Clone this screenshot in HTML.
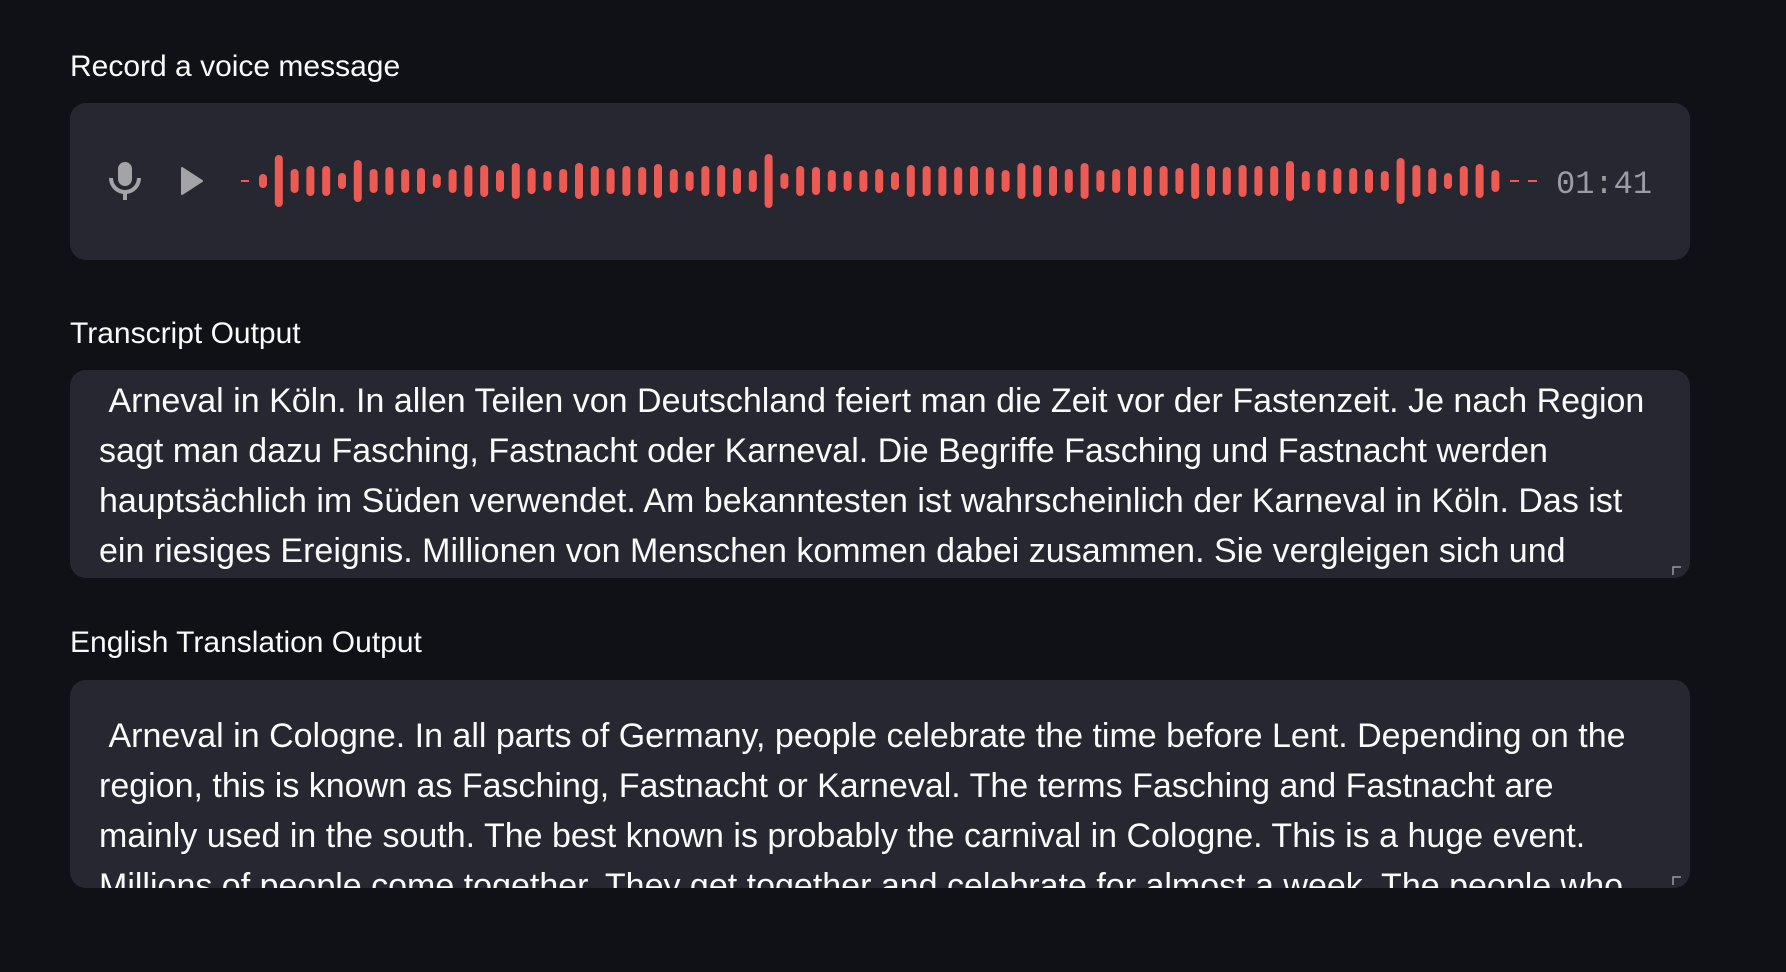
<!DOCTYPE html>
<html><head><meta charset="utf-8"><style>
html,body{margin:0;padding:0;background:#0f1117;width:1786px;height:972px;overflow:hidden}
body{font-family:"Liberation Sans",sans-serif;color:#fafafa;position:relative}
.lbl{position:absolute;left:70px;font-size:30px;letter-spacing:0px;line-height:34px}
.box{position:absolute;left:70px;width:1620px;background:#262730;border-radius:16px;overflow:hidden}
.txt{position:absolute;left:99px;font-size:34px;letter-spacing:0px;line-height:50px;white-space:nowrap;color:#fafafa}
.rz{position:absolute;width:10px;height:10px}
</style></head><body>
<div class="lbl" style="top:50px">Record a voice message</div>
<div class="box" style="top:103px;height:157px"></div>
<svg style="position:absolute;left:0;top:0" width="1786" height="300">
<g fill="#a3a3a8">
<rect x="118" y="162" width="14" height="24" rx="7"/>
<path d="M111 178 a14 14 0 0 0 28 0" stroke="#a3a3a8" stroke-width="4" fill="none"/>
<rect x="123" y="192" width="4" height="8"/>
<path d="M182 168 L202 181 L182 194 Z" stroke="#a3a3a8" stroke-width="2" stroke-linejoin="round"/>
</g>
<g fill="#ed5a53" id="w"></g>
<rect x="241" y="180" width="8" height="2" fill="#ed5a53"/>
<rect x="1510" y="180" width="9" height="2" fill="#ed5a53"/>
<rect x="1528" y="180" width="9" height="2" fill="#ed5a53"/>
<text x="1556" y="193" font-family="Liberation Mono,monospace" font-size="32" fill="#9c9ca2">01:41</text>
</svg>
<script>
var h=[14,52,24,30,30,16,42,24,28,24,26,14,24,32,32,22,36,26,20,24,36,30,26,30,28,34,24,20,30,32,26,22,54,16,30,28,22,20,22,24,18,32,30,30,28,30,28,22,36,32,30,24,36,22,24,30,30,30,26,36,30,28,32,30,30,40,20,24,26,26,24,20,46,32,26,16,30,34,22];
var g=document.getElementById('w'),s='';
for(var i=0;i<h.length;i++){var x=259+i*15.8;s+='<rect x="'+x.toFixed(1)+'" y="'+(181-h[i]/2)+'" width="8" height="'+h[i]+'" rx="4"/>';}
g.innerHTML=s;
</script>

<div class="lbl" style="top:317px">Transcript Output</div>
<div class="box" style="top:370px;height:208px">
<div class="txt" style="left:29px;top:6px">&nbsp;Arneval in Köln. In allen Teilen von Deutschland feiert man die Zeit vor der Fastenzeit. Je nach Region<br>sagt man dazu Fasching, Fastnacht oder Karneval. Die Begriffe Fasching und Fastnacht werden<br>hauptsächlich im Süden verwendet. Am bekanntesten ist wahrscheinlich der Karneval in Köln. Das ist<br>ein riesiges Ereignis. Millionen von Menschen kommen dabei zusammen. Sie vergleigen sich und</div>
<svg class="rz" style="right:8px;bottom:2px" viewBox="0 0 10 10"><path d="M1 9 L1 1 L9 1" stroke="#9a9aa0" stroke-width="1.5" fill="none"/></svg>
</div>

<div class="lbl" style="top:626px">English Translation Output</div>
<div class="box" style="top:680px;height:208px">
<div class="txt" style="left:29px;top:31px">&nbsp;Arneval in Cologne. In all parts of Germany, people celebrate the time before Lent. Depending on the<br>region, this is known as Fasching, Fastnacht or Karneval. The terms Fasching and Fastnacht are<br>mainly used in the south. The best known is probably the carnival in Cologne. This is a huge event.<br>Millions of people come together. They get together and celebrate for almost a week. The people who</div>
<svg class="rz" style="right:8px;bottom:2px" viewBox="0 0 10 10"><path d="M1 9 L1 1 L9 1" stroke="#9a9aa0" stroke-width="1.5" fill="none"/></svg>
</div>
</body></html>
